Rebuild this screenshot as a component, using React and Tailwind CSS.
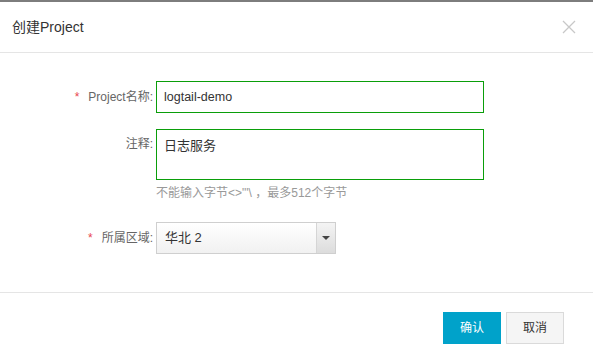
import React from "react";

const Label = ({ required, children }) => (
  <div className="w-[156px] shrink-0 flex justify-end items-center pr-[3px] text-[12px] text-[#666]">
    {required && <span className="text-[#e8464f] mr-[9px]">*</span>}
    <span>{children}</span>
  </div>
);

export default function App() {
  return (
    <div
      className="w-[593px] h-[360px] bg-white flex flex-col"
      style={{ fontFamily: '"Liberation Sans", "Noto Sans CJK SC", sans-serif' }}
    >
      <div className="h-[2px] bg-[#7d7d7d] shrink-0" />

      <div className="h-[51px] shrink-0 flex items-center justify-between border-b border-[#e5e5e5] pl-[12px] pr-[17px]">
        <span className="text-[14px] text-[#333]">创建Project</span>
        <svg width="14" height="14" viewBox="0 0 14 14">
          <path d="M1 1 L13 13 M13 1 L1 13" stroke="#c8c8c8" strokeWidth="1.3" fill="none" />
        </svg>
      </div>

      <div className="flex flex-col pt-[28px] h-[240px] shrink-0 border-b border-[#e5e5e5]">
        <div className="flex h-[32px]">
          <Label required>Project名称:</Label>
          <div className="w-[328px] h-[32px] border border-[#0a9e0a] flex items-center px-[7px] text-[12.5px] text-[#333]">
            logtail-demo
          </div>
        </div>

        <div className="flex mt-[16px]">
          <div className="w-[156px] shrink-0 flex justify-end pr-[3px] pt-[6px] text-[12px] text-[#666]">注释:</div>
          <div className="w-[328px] h-[51px] border border-[#0a9e0a] px-[7px] pt-[6px] text-[13px] text-[#333]">
            日志服务
          </div>
        </div>

        <div className="ml-[156px] mt-[6px] text-[12px] text-[#999] leading-[14px]">
          不能输入字节&lt;&gt;"'\ ，最多512个字节
        </div>

        <div className="flex h-[32px] mt-[22px]">
          <Label required>所属区域:</Label>
          <div className="w-[180px] h-[32px] border border-[#cfcfcf] flex bg-gradient-to-b from-white to-[#f1f1f1]">
            <div className="flex-1 flex items-center px-[8px] text-[13px] text-[#333]">华北 2</div>
            <div className="w-[19px] border-l border-[#d5d5d5] bg-gradient-to-b from-[#f4f4f4] to-[#dcdcdc] flex items-center justify-center">
              <svg width="8" height="4" viewBox="0 0 8 4">
                <path d="M0 0 H8 L4 4 Z" fill="#444" />
              </svg>
            </div>
          </div>
        </div>
      </div>

      <div className="flex justify-end gap-[5px] pr-[29px] pt-[19px]">
        <button className="w-[58px] h-[32px] bg-[#00a2ca] text-white text-[12px]">确认</button>
        <button className="w-[58px] h-[32px] bg-[#f5f5f5] border border-[#dadada] text-[#333] text-[12px]">取消</button>
      </div>
    </div>
  );
}
